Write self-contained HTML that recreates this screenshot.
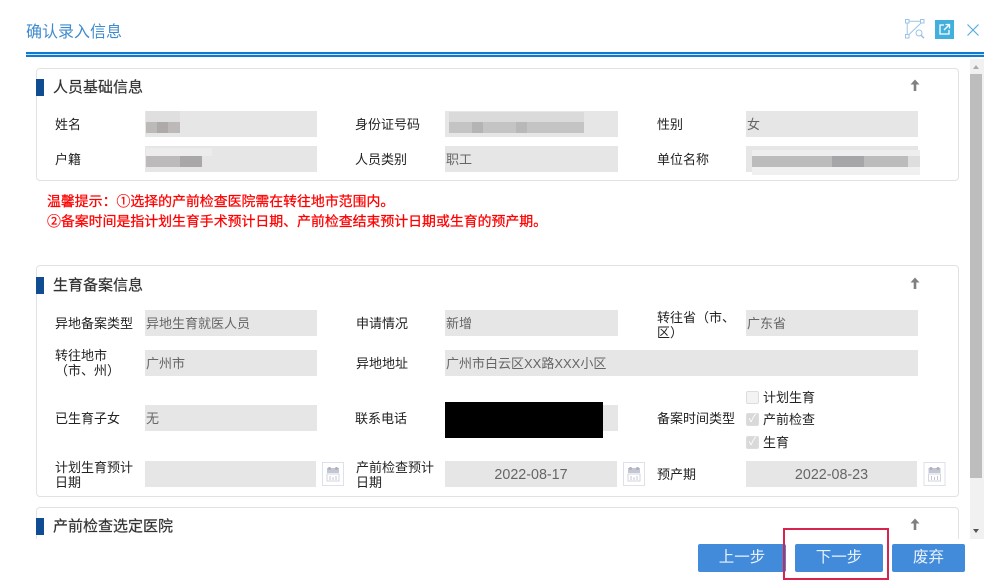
<!DOCTYPE html>
<html lang="zh-CN"><head><meta charset="utf-8"><title>确认录入信息</title>
<style>
html,body{margin:0;padding:0;background:#fff}
#p{position:relative;width:1000px;height:588px;overflow:hidden;background:#fff;font-family:"Liberation Sans","Noto Sans CJK SC",sans-serif;color:#333;font-size:13px;filter:blur(.35px)}
#p div,#p span,#p svg{position:absolute;box-sizing:border-box}
.panel{left:36px;width:923px;border:1px solid #e2e2e2;border-radius:4px;background:#fff}
.bar{left:36px;width:8px;height:17px;background:#0f4c92}
.h{left:53px;font-size:15px;line-height:18px;color:#333;white-space:nowrap;-webkit-text-stroke:.2px #333}
.l{font-size:13px;line-height:15px;color:#222;white-space:nowrap}
.f{background:#e6e6e6;height:26px;color:#666;font-size:13px;line-height:28px;padding-left:1px;white-space:nowrap}
.d{text-align:center;font-size:14.3px;padding:0}
.btn{top:544px;height:28px;background:#428bdb;border-radius:2px;color:#e8f1fb;font-size:15.500px;line-height:28px;text-align:center}
.cb{left:746px;width:13px;height:13px;border:1px solid #ddd;border-radius:2px;background:#f3f3f3}
.cb.on{background:#d9d9d9;color:#fff;font-size:11px;line-height:11px;text-align:center}
.cl{left:763px;font-size:13px;line-height:15px;color:#222;white-space:nowrap}
.red{left:47px;color:#f00;font-size:13.9px;line-height:18px;white-space:nowrap;-webkit-text-stroke:.25px #f00}
</style></head><body><div id="p">

<div style="left:26px;top:22px;font-size:16px;line-height:20px;color:#3f8bcf;white-space:nowrap;margin-top:1px">确认录入信息</div>
<svg style="left:904px;top:18px" width="22" height="22" viewBox="0 0 22 22" fill="none" stroke="#9cc3e6" stroke-width="1"><rect x="1.500" y="1.500" width="3.500" height="3.500"/><rect x="16.500" y="1.500" width="3.500" height="3.500"/><rect x="1.500" y="16.500" width="3.500" height="3.500"/><path d="M5 3.200h11.500M3.200 5v11.500M5 16.500L17 5"/><circle cx="15" cy="15" r="3"/><path d="M17 17.200l3 3" stroke-width="1.500"/></svg>
<div style="left:935px;top:20px;width:19px;height:19px;background:#41b0dc"></div>
<svg style="left:935px;top:20px" width="19" height="19" viewBox="0 0 19 19" fill="none" stroke="#fff" stroke-width="1.300"><path d="M9 5H5v9h9v-4M9 10l5.500-5.500M10.500 4.500h4v4"/></svg>
<svg style="left:966px;top:23px" width="14" height="14" viewBox="0 0 14 14" fill="none" stroke="#55aee0" stroke-width="1.200"><path d="M1.500 1.500l11 11M12.500 1.500l-11 11"/></svg>

<div style="left:26px;top:52px;width:958px;height:5px;border-top:2px solid #0f7bd0;border-bottom:2px solid #0f7bd0;background:#cfe4f5"></div>

<div style="left:970px;top:59px;width:14px;height:480px;background:#f1f1f1"></div>
<div style="left:970px;top:74px;width:12px;height:404px;background:#bdbdbd"></div>
<div style="left:973px;top:65px;width:0;height:0;border-left:3.500px solid transparent;border-right:3.500px solid transparent;border-bottom:4px solid #aaa"></div>
<div style="left:973px;top:529px;width:0;height:0;border-left:3.500px solid transparent;border-right:3.500px solid transparent;border-top:4px solid #555"></div>

<!-- panel 1 -->
<div class="panel" style="top:68px;height:113px"></div>
<div class="bar" style="top:79px"></div>
<div class="h" style="top:79px">人员基础信息</div>
<svg style="left:909px;top:78px" width="12" height="14" viewBox="0 0 12 13" fill="#808080"><path d="M6 1L10.500 6H7.300V12.500H4.700V6H1.500z"/></svg>

<div class="l" style="left:55px;top:117px">姓名</div>
<div class="f" style="left:145px;top:111px;width:172px"></div>
<div style="left:146px;top:111px;width:34px;height:11px;background:#e0dfdf"></div>
<div style="left:146px;top:122px;width:34px;height:11px;background:#bdb9b8"></div>
<div style="left:157px;top:122px;width:11px;height:11px;background:#aeaaaa"></div>

<div class="l" style="left:55px;top:152px">户籍</div>
<div class="f" style="left:145px;top:146px;width:172px"></div>
<div style="left:146px;top:148px;width:66px;height:8px;background:#ececec"></div>
<div style="left:146px;top:156px;width:56px;height:11px;background:#bcbaba"></div>
<div style="left:180px;top:156px;width:22px;height:11px;background:#a9a7a7"></div>

<div class="l" style="left:355px;top:117px">身份证号码</div>
<div class="f" style="left:445px;top:111px;width:173px"></div>
<div style="left:449px;top:112px;width:135px;height:10px;background:#dadada"></div>
<div style="left:449px;top:122px;width:135px;height:11px;background:#c4c4c4"></div>
<div style="left:472px;top:122px;width:11px;height:11px;background:#b4b4b4"></div>
<div style="left:516px;top:122px;width:11px;height:11px;background:#b8b8b8"></div>

<div class="l" style="left:355px;top:152px">人员类别</div>
<div class="f" style="left:445px;top:146px;width:173px">职工</div>

<div class="l" style="left:657px;top:117px">性别</div>
<div class="f" style="left:746px;top:111px;width:172px">女</div>

<div class="l" style="left:657px;top:152px">单位名称</div>
<div class="f" style="left:746px;top:146px;width:172px"></div>
<div style="left:752px;top:150px;width:168px;height:6px;background:#eeeeee"></div>
<div style="left:752px;top:156px;width:168px;height:11px;background:#bcbcbc"></div>
<div style="left:832px;top:156px;width:32px;height:11px;background:#a6a6a8"></div>
<div style="left:908px;top:156px;width:12px;height:11px;background:#dedede"></div>
<div style="left:752px;top:167px;width:168px;height:8px;background:#f0f0f0"></div>

<!-- tip -->
<div class="red" style="top:192px">温馨提示：①选择的产前检查医院需在转往地市范围内。</div>
<div class="red" style="top:212px">②备案时间是指计划生育手术预计日期、产前检查结束预计日期或生育的预产期。</div>

<!-- panel 2 -->
<div class="panel" style="top:265px;height:232px"></div>
<div class="bar" style="top:277px"></div>
<div class="h" style="top:277px">生育备案信息</div>
<svg style="left:909px;top:276px" width="12" height="14" viewBox="0 0 12 13" fill="#808080"><path d="M6 1L10.500 6H7.300V12.500H4.700V6H1.500z"/></svg>

<div class="l" style="left:55px;top:316px">异地备案类型</div>
<div class="f" style="left:145px;top:310px;width:172px">异地生育就医人员</div>
<div class="l" style="left:356px;top:316px">申请情况</div>
<div class="f" style="left:445px;top:310px;width:173px">新增</div>
<div class="l" style="left:657px;top:310px">转往省（市、<br>区）</div>
<div class="f" style="left:746px;top:310px;width:172px">广东省</div>

<div class="l" style="left:55px;top:348px">转往地市<br>（市、州）</div>
<div class="f" style="left:145px;top:350px;width:172px">广州市</div>
<div class="l" style="left:356px;top:356px">异地地址</div>
<div class="f" style="left:445px;top:350px;width:473px">广州市白云区XX路XXX小区</div>

<div class="l" style="left:55px;top:411px">已生育子女</div>
<div class="f" style="left:145px;top:405px;width:172px">无</div>
<div class="l" style="left:355px;top:411px">联系电话</div>
<div class="f" style="left:445px;top:405px;width:173px"></div>
<div style="left:445px;top:402px;width:158px;height:36px;background:#000"></div>
<div class="l" style="left:657px;top:411px">备案时间类型</div>
<div class="cb" style="top:391px"></div><div class="cl" style="top:390px">计划生育</div>
<div class="cb on" style="top:413px">✓</div><div class="cl" style="top:412px">产前检查</div>
<div class="cb on" style="top:436px">✓</div><div class="cl" style="top:435px">生育</div>

<div class="l" style="left:55px;top:460px">计划生育预计<br>日期</div>
<div class="f" style="left:145px;top:461px;width:171px"></div>
<div class="l" style="left:356px;top:460px">产前检查预计<br>日期</div>
<div class="f d" style="left:445px;top:461px;width:172px">2022-08-17</div>
<div class="l" style="left:657px;top:467px">预产期</div>
<div class="f d" style="left:746px;top:461px;width:171px">2022-08-23</div>

<svg style="left:322px;top:462px" width="22" height="24" viewBox="0 0 22 24"><rect x=".5" y=".5" width="21" height="23" fill="#fff" stroke="#dfe1ea"/><rect x="5" y="6" width="12" height="5" fill="#c4c6d4"/><rect x="6" y="5" width="3" height="3" rx="1.500" fill="#aeb0c2"/><rect x="13" y="5" width="3" height="3" rx="1.500" fill="#aeb0c2"/><rect x="5" y="12" width="12" height="7" fill="none" stroke="#d3d5e0"/><path d="M8 14v4M11 15v3M14 14v4" stroke="#c4c6d4"/></svg>
<svg style="left:623px;top:462px" width="22" height="24" viewBox="0 0 22 24"><rect x=".5" y=".5" width="21" height="23" fill="#fff" stroke="#dfe1ea"/><rect x="5" y="6" width="12" height="5" fill="#c4c6d4"/><rect x="6" y="5" width="3" height="3" rx="1.500" fill="#aeb0c2"/><rect x="13" y="5" width="3" height="3" rx="1.500" fill="#aeb0c2"/><rect x="5" y="12" width="12" height="7" fill="none" stroke="#d3d5e0"/><path d="M8 14v4M11 15v3M14 14v4" stroke="#c4c6d4"/></svg>
<svg style="left:923px;top:462px" width="23" height="24" viewBox="0 0 22 24"><rect x=".5" y=".5" width="21" height="23" fill="#fff" stroke="#dfe1ea"/><rect x="5" y="6" width="12" height="5" fill="#c4c6d4"/><rect x="6" y="5" width="3" height="3" rx="1.500" fill="#aeb0c2"/><rect x="13" y="5" width="3" height="3" rx="1.500" fill="#aeb0c2"/><rect x="5" y="12" width="12" height="7" fill="none" stroke="#d3d5e0"/><path d="M8 14v4M11 15v3M14 14v4" stroke="#c4c6d4"/></svg>

<!-- panel 3 -->
<div class="panel" style="top:507px;height:60px"></div>
<div class="bar" style="top:518px"></div>
<div class="h" style="top:518px">产前检查选定医院</div>
<svg style="left:909px;top:517px" width="12" height="14" viewBox="0 0 12 13" fill="#808080"><path d="M6 1L10.500 6H7.300V12.500H4.700V6H1.500z"/></svg>
<div style="left:0;top:539px;width:1000px;height:49px;background:#fff"></div>

<!-- buttons -->
<div class="btn" style="left:698px;width:88px">上一步</div>
<div class="btn" style="left:795px;width:88px">下一步</div>
<div class="btn" style="left:892px;width:73px">废弃</div>
<div style="left:783px;top:528px;width:106px;height:52px;border:2px solid #d8244c"></div>

</div></body></html>
